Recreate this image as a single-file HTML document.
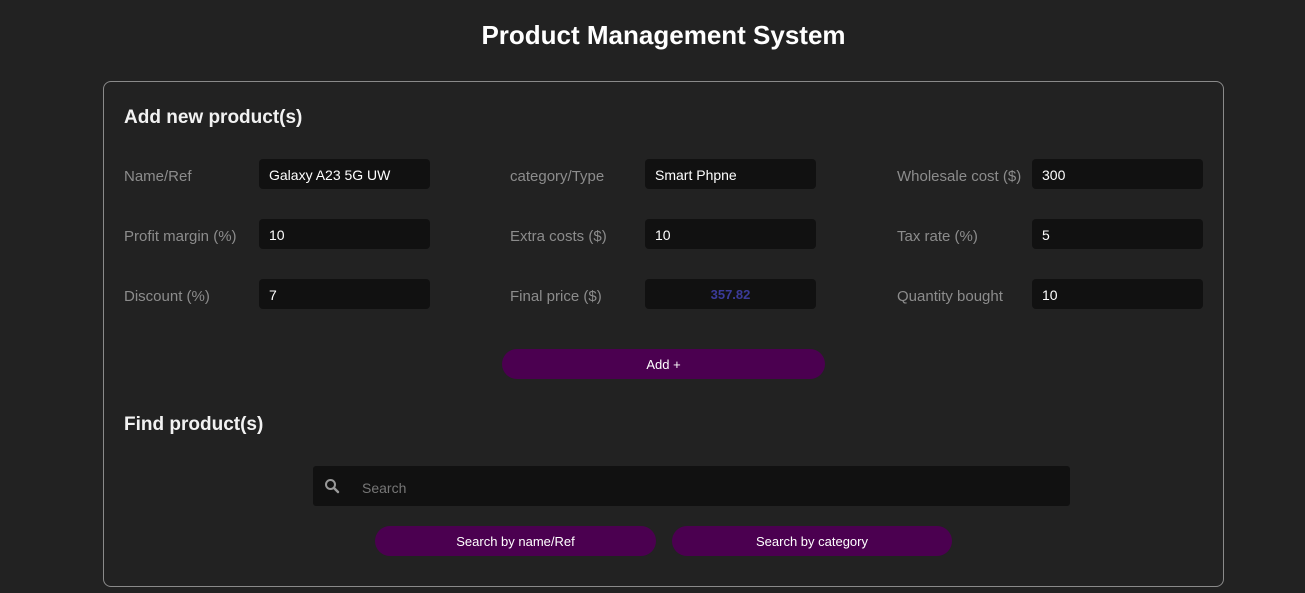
<!DOCTYPE html><html><head><style>
body{margin:0;width:1305px;height:593px;background:#222;overflow:hidden;font-family:"Liberation Sans",sans-serif;position:relative;color:#fff}
.a{position:absolute}
h1{position:absolute;left:11px;width:1305px;top:20px;margin:0;text-align:center;font-size:26px;font-weight:bold;color:#fff}
.panel{left:103px;top:81px;width:1119px;height:504px;border:1px solid #8a8a8a;border-radius:8px}
.h{font-size:19px;font-weight:bold;color:#f2f2f2}
.l{font-size:15px;color:#8c8c8c;line-height:30px}
.i{background:#111;border-radius:4px;height:30px;width:171px;font-size:14px;line-height:32px;box-sizing:border-box;padding-left:10px;color:#fff}
.b{background:#4b0050;border-radius:15px;height:30px;line-height:32px;text-align:center;font-size:13px;color:#fff}
</style></head><body>
<h1>Product Management System</h1>
<div class="a panel"></div>
<div class="a h" style="left:124px;top:107px">Add new product(s)</div>
<div class="a l" style="left:124px;top:162px">Name/Ref</div>
<div class="a i" style="left:259px;top:159px">Galaxy A23 5G UW</div>
<div class="a l" style="left:510px;top:162px">category/Type</div>
<div class="a i" style="left:645px;top:159px">Smart Phpne</div>
<div class="a l" style="left:897px;top:162px">Wholesale cost ($)</div>
<div class="a i" style="left:1032px;top:159px">300</div>
<div class="a l" style="left:124px;top:222px">Profit margin (%)</div>
<div class="a i" style="left:259px;top:219px">10</div>
<div class="a l" style="left:510px;top:222px">Extra costs ($)</div>
<div class="a i" style="left:645px;top:219px">10</div>
<div class="a l" style="left:897px;top:222px">Tax rate (%)</div>
<div class="a i" style="left:1032px;top:219px">5</div>
<div class="a l" style="left:124px;top:282px">Discount (%)</div>
<div class="a i" style="left:259px;top:279px">7</div>
<div class="a l" style="left:510px;top:282px">Final price ($)</div>
<div class="a i" style="left:645px;top:279px;text-align:center;padding:0;color:#3b3b9a;font-weight:bold;font-size:13px">357.82</div>
<div class="a l" style="left:897px;top:282px">Quantity bought</div>
<div class="a i" style="left:1032px;top:279px">10</div>
<div class="a b" style="left:502px;top:349px;width:323px">Add +</div>
<div class="a h" style="left:124px;top:414px">Find product(s)</div>
<div class="a" style="left:313px;top:466px;width:757px;height:40px;background:#111;border-radius:3px"></div>
<svg class="a" style="left:324px;top:478px" width="16" height="16" viewBox="0 0 16 16"><circle cx="6.5" cy="6.5" r="4.5" fill="none" stroke="#999" stroke-width="2"/><path d="M10 10l4 4" stroke="#999" stroke-width="2.4" stroke-linecap="round"/></svg>
<div class="a" style="left:362px;top:480px;font-size:14px;color:#777">Search</div>
<div class="a b" style="left:375px;top:526px;width:281px">Search by name/Ref</div>
<div class="a b" style="left:672px;top:526px;width:280px">Search by category</div>
</body></html>
